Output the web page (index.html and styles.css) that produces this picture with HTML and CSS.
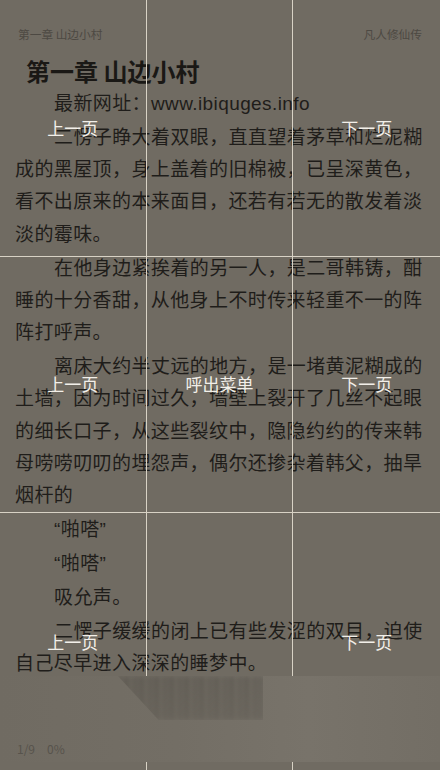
FILE: index.html
```html
<!DOCTYPE html>
<html lang="zh-CN">
<head>
<meta charset="utf-8">
<title>第一章 山边小村</title>
<link rel="stylesheet" href="styles.css">
</head>
<body>
<div class="reader">
  <header class="top">
    <span>第一章 山边小村</span>
    <span>凡人修仙传</span>
  </header>
  <h1 class="title">第一章 山边小村</h1>
  <article class="text">
    <p>最新网址：www.ibiquges.info</p>
    <p>二愣子睁大着双眼，直直望着茅草和烂泥糊成的黑屋顶，身上盖着的旧棉被，已呈深黄色，看不出原来的本来面目，还若有若无的散发着淡淡的霉味。</p>
    <p>在他身边紧挨着的另一人，是二哥韩铸，酣睡的十分香甜，从他身上不时传来轻重不一的阵阵打呼声。</p>
    <p>离床大约半丈远的地方，是一堵黄泥糊成的土墙，因为时间过久，墙壁上裂开了几丝不起眼的细长口子，从这些裂纹中，隐隐约约的传来韩母唠唠叨叨的埋怨声，偶尔还掺杂着韩父，抽旱烟杆的</p>
    <p>“啪嗒”</p>
    <p>“啪嗒”</p>
    <p>吸允声。</p>
    <p>二愣子缓缓的闭上已有些发涩的双目，迫使自己尽早进入深深的睡梦中。</p>
  </article>
  <div class="grid">
    <div class="cell"><span class="label">上一页</span></div>
    <div class="cell"></div>
    <div class="cell"><span class="label">下一页</span></div>
    <div class="cell"><span class="label">上一页</span></div>
    <div class="cell"><span class="label">呼出菜单</span></div>
    <div class="cell"><span class="label">下一页</span></div>
    <div class="cell"><span class="label">上一页</span></div>
    <div class="cell"></div>
    <div class="cell"><span class="label">下一页</span></div>
  </div>
  <div class="smudge"><div class="streaks"></div></div>
  <footer class="bottom"><span>1/9</span><span>0%</span></footer>
</div>
</body>
</html>
```
FILE: styles.css
```css
* { box-sizing: border-box; }
html, body {
  margin: 0;
  padding: 0;
  background: #706b62;
}
body {
  font-family: "Noto Sans CJK SC", "Noto Sans", sans-serif;
}
.reader {
  position: relative;
  width: 440px;
  height: 770px;
  overflow: hidden;
  background: #706b62;
}
.top {
  display: flex;
  justify-content: space-between;
  padding: 26px 18px 0 18px;
  font-size: 11.7px;
  line-height: 16px;
  color: #4d4943;
}
.title {
  margin: 12px 0 0 26px;
  font-size: 24px;
  line-height: 34px;
  font-weight: 700;
  color: #1a1815;
}
.text {
  padding: 0 17px 0 15px;
  color: #1f1d1a;
  font-family: "Liberation Sans", "Noto Sans CJK SC", sans-serif;
  font-size: 19px;
  letter-spacing: 0.4px;
  line-height: 32.3px;
}
.text p {
  margin: 0 0 1.6px 0;
  text-indent: 39px;
}
.grid {
  position: absolute;
  inset: 0;
  display: grid;
  grid-template-columns: repeat(3, 1fr);
  grid-template-rows: repeat(3, 1fr);
}
.cell {
  display: flex;
  align-items: center;
  justify-content: center;
  border-color: #d8d2c5;
  border-style: solid;
  border-width: 0;
}
.cell:nth-child(3n+1), .cell:nth-child(3n+2) {
  border-right-width: 1px;
}
.cell:nth-child(-n+6) {
  border-bottom-width: 1px;
}
.label {
  font-size: 17px;
  line-height: 20px;
  color: #f2efe9;
}
.smudge {
  position: absolute;
  left: 0;
  top: 676px;
  width: 440px;
  height: 86px;
  background: linear-gradient(90deg, #706b62 0%, #736e65 40%, #78736a 70%, #736e65 100%);
}
.streaks {
  position: absolute;
  left: 118px;
  top: 0;
  width: 145px;
  height: 44px;
  background:
    linear-gradient(180deg, rgba(112,107,98,0) 0%, rgba(112,107,98,0.35) 100%),
    repeating-linear-gradient(90deg, rgba(40,37,33,0.45) 0 3px, rgba(90,86,79,0.3) 3px 7px, rgba(50,47,42,0.5) 7px 11px, rgba(110,105,96,0.2) 11px 15px);
  clip-path: polygon(0 0, 100% 0, 100% 100%, 28% 100%);
  filter: blur(2.5px);
  opacity: 0.75;
}
.bottom {
  position: absolute;
  left: 17px;
  top: 740px;
  display: flex;
  gap: 12px;
  font-size: 12px;
  line-height: 18px;
  color: #57534c;
}
```
